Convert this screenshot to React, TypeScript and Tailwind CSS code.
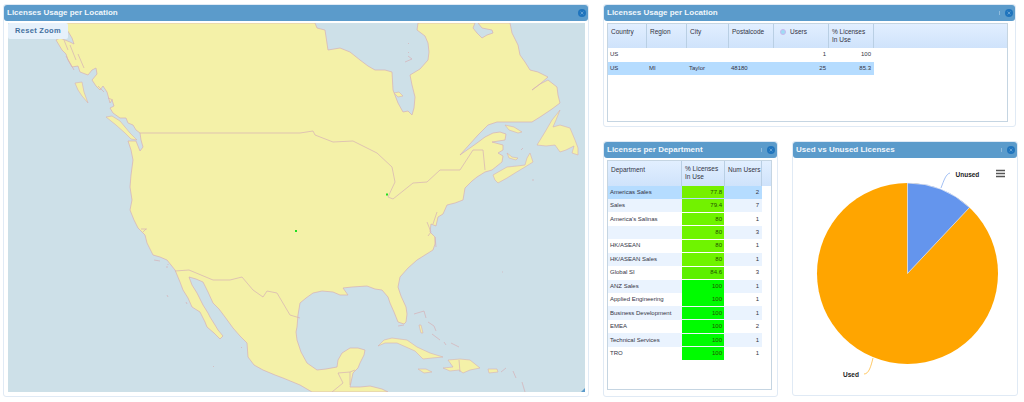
const font = 'font-["Liberation_Sans",Arial,sans-serif]';

const landPath =
  'M60 23 L66 28 L72 38 L74 44 L70 42 L65 40 L60 38 L56 40 L62 50 L66 54 L68 60 L72 67 L78 66 L80 72 L88 75 L92 70 L96 68 L97 74 L92 80 L96 86 L100 90 L103 86 L107 92 L110 103 L112 100 L114 106 L110 108 L113 113 L120 118 L126 118 L128 123 L133 125 L136 130 L140 133 L141 140 L143 147 L140 151 L138 146 L136 141 L128 141 L131 150 L133 160 L131 175 L130 187 L132 200 L130 210 L134 220 L138 228 L145 235 L147 243 L153 255 L160 257 L167 260 L175 270 L180 282 L183 290 L188 298 L192 307 L200 312 L205 322 L207 327 L214 333 L220 339 L223 336 L218 330 L215 325 L210 317 L208 313 L203 305 L197 293 L192 285 L189 277 L196 279 L203 282 L208 292 L213 303 L219 309 L225 317 L233 328 L240 336 L247 343 L248 357 L254 365 L263 370 L275 375 L283 378 L300 385 L312 392 L388 392 L382 389 L370 386 L360 387 L350 387 L353 373 L358 368 L360 363 L364 355 L365 350 L358 348 L350 348 L342 353 L338 360 L337 367 L326 369 L317 370 L307 363 L301 352 L297 340 L296 332 L297 327 L298 315 L300 303 L306 298 L313 293 L322 291 L333 292 L340 295 L348 295 L343 288 L352 287 L367 286 L375 289 L382 290 L388 297 L390 303 L394 312 L398 322 L404 324 L406 322 L407 314 L406 307 L401 296 L398 287 L400 277 L408 268 L417 260 L425 255 L433 250 L435 244 L435 237 L430 232 L431 224 L436 226 L438 217 L443 214 L447 205 L455 203 L463 200 L465 188 L472 181 L477 177 L485 172 L492 170 L497 166 L502 162 L503 156 L498 153 L503 150 L503 145 L492 142 L505 140 L506 134 L500 132 L493 133 L485 137 L477 143 L460 155 L478 135 L488 125 L497 122 L515 122 L532 122 L540 117 L552 109 L560 103 L558 95 L557 87 L548 80 L540 84 L532 90 L540 84 L548 77 L538 72 L530 70 L525 62 L520 55 L518 45 L512 33 L510 23 L478 23 L482 28 L492 30 L493 33 L487 35 L482 38 L477 33 L473 28 L475 23 L418 23 L417 30 L425 36 L428 43 L429 52 L428 60 L420 69 L410 75 L412 85 L415 97 L414 108 L412 115 L408 111 L403 112 L398 103 L393 90 L392 72 L385 70 L375 70 L368 66 L360 60 L350 52 L340 48 L328 50 L325 30 L317 28 L315 23 Z';

const islands = [
  'M106 117 L112 116 L120 121 L130 133 L137 140 L131 139 L125 133 L116 125 Z',
  'M75 83 L82 82 L84 92 L88 103 L82 96 L78 90 Z',
  'M394 93 L399 92 L403 96 L398 97 Z',
  'M505 125 L514 127 L522 132 L518 133 L509 130 Z',
  'M537 145 L545 132 L552 120 L560 110 L556 120 L553 127 L560 125 L570 128 L575 140 L578 148 L578 155 L572 153 L574 146 L566 150 L560 152 L555 145 L546 146 Z',
  'M378 346 L384 340 L392 338 L407 340 L417 347 L430 353 L443 357 L432 358 L423 359 L415 351 L397 343 L385 343 Z',
  'M443 368 L453 367 L448 360 L460 359 L470 360 L480 368 L470 370 L463 373 L459 370 L450 371 Z',
  'M418 369 L426 369 L432 372 L424 373 Z',
  'M488 369 L497 369 L498 372 L489 373 Z',
  'M495 180 L493 175 L500 171 L507 167 L517 166 L525 165 L527 158 L530 153 L533 162 L525 167 L515 173 L507 178 L498 183 Z',
  'M507 153 L512 157 L518 158 L516 160 L509 158 Z',
  'M419 325 L421 325 L423 333 L421 333 Z',
];

const lines = [
  // US-Canada
  'M140 133 L300 133 L313 131 L315 135 L333 142 L353 141 L377 153 L392 167 L395 182 L388 197 L393 199 L413 183 L427 182 L440 170 L460 170 L473 150 L483 150 L485 170',
  // US-Mexico
  'M175 271 L189 270 L213 280 L230 280 L242 277 L253 290 L263 297 L267 291 L277 293 L290 315 L300 318',
  // Central America
  'M338 373 L343 383 L332 392 M350 372 L350 385 M338 373 L350 372 L355 370',
  'M459 360 L460 372',
  // Santa Barbara, Bay area
  'M141 229 L147 229 M143 232 L146 229',
  // Belcher
  'M408 56 L412 59 L405 62 M409 52 L408 53 M408 43 L409 44',
  // Alaska fjords
  'M64 40 L68 50 M70 45 L76 60 M78 54 L84 68 M66 56 L74 70 M98 86 L104 92 M108 98 L113 100',
  // Chesapeake, Outer Banks
  'M427 222 L431 232 L428 236 M437 212 L433 224 M435 237 L436 247',
  // Bahamas, Antilles
  'M414 314 L424 311 L426 318 M428 322 L434 326 L436 331 M432 334 L440 340 M444 342 L446 345 M451 343 L459 347 M501 372 L506 368 M513 371 L516 378 M522 382 L525 392',
  'M398 326 L404 325',
  // Pacific specks
  'M154 260 L160 261 M167 266 L167 268 M168 264 L168 265 M167 295 L168 297 M186 302 L187 304 M241 347 L242 348 M213 366 L214 367',
  'M502 272 L503 272 M532 180 L534 180 M521 150 L523 148',
];

function PanelHeader({ title, pin }: { title: string; pin?: boolean }) {
  return (
    <div className="flex h-[16px] shrink-0 items-center justify-between rounded-[3px] bg-[#5b9bcb] pl-[3px] pr-[2px]">
      <span className={`${font} pb-[1px] text-[8px] font-bold text-[#f0f6fb]`}>{title}</span>
      <div className="flex items-center gap-[5px]">
        {pin && <span className="h-[4px] w-[1.5px] bg-[#8fbbdc]" />}
        <svg width="8" height="8" viewBox="0 0 8 8">
          <circle cx="4" cy="4" r="4" fill="#1f74bd" />
          <path d="M2.6 2.6 L5.4 5.4 M5.4 2.6 L2.6 5.4" stroke="#6aa5d6" strokeWidth="0.9" />
        </svg>
      </div>
    </div>
  );
}

function MapPanel() {
  return (
    <div className="flex h-[393px] w-[586px] shrink-0 flex-col rounded-[3px] border border-[#e0eaf5] bg-white">
      <PanelHeader title="Licenses Usage per Location" />
      <div className="relative ml-[4px] mt-[2px] h-[369px] w-[577px] bg-[#cde0e8]">
        <svg className="block" width="577" height="369" viewBox="8 23 577 369">
          <path d={landPath} fill="#f4f1a8" stroke="#d6b0b6" strokeWidth="0.7" strokeLinejoin="round" />
          {islands.map((d, i) => (
            <path key={i} d={d} fill="#f4f1a8" stroke="#d6b0b6" strokeWidth="0.6" strokeLinejoin="round" />
          ))}
          {lines.map((d, i) => (
            <path key={i} d={d} fill="none" stroke="#d6b0b6" strokeWidth="0.7" />
          ))}
          <rect x="386" y="193.5" width="2" height="2" fill="#22dd22" />
          <rect x="295" y="230" width="2" height="2" fill="#22dd22" />
          <path d="M585 388 L585 392 L581 392 Z" fill="#5b9bcb" />
        </svg>
        <button className={`${font} absolute left-0 top-0 h-[16px] w-[60px] rounded-[2px] bg-[#e6f1fb] text-[7.5px] font-bold tracking-[0.3px] text-[#44709f]`}>
          Reset Zoom
        </button>
      </div>
    </div>
  );
}

const locCols = [
  { name: 'Country', w: 'w-[39px]' },
  { name: 'Region', w: 'w-[40px]' },
  { name: 'City', w: 'w-[42px]' },
  { name: 'Postalcode', w: 'w-[45px]' },
  { name: 'Users', w: 'w-[55px]' },
  { name: '% Licenses', extra: 'In Use', w: 'w-[45px]' },
];

const locRows = [
  { c: 'US', r: '', city: '', p: '', u: '1', pct: '100', sel: false },
  { c: 'US', r: 'MI', city: 'Taylor', p: '48180', u: '25', pct: '85.3', sel: true },
];

function LocationPanel() {
  return (
    <div className="flex h-[123px] w-[413px] flex-col rounded-[3px] border border-[#e0eaf5] bg-white">
      <PanelHeader title="Licenses Usage per Location" pin />
      <div className={`${font} ml-[3px] mt-[2px] flex h-[99px] w-[401px] flex-col border border-[#c5d5e2] text-[6px] text-[#333344]`}>
        <div className="flex h-[24px] bg-gradient-to-b from-[#e2efff] to-[#cfe3fb] text-[6.5px]">
          {locCols.map((col) => (
            <div key={col.name} className={`${col.w} flex shrink-0 gap-[4px] border-r border-[#b9cfe4] pl-[3px] pt-[4px] leading-[8px]`}>
              {col.name === 'Users' && (
                <span className="ml-[3px] mt-[1px] h-[6px] w-[6px] rounded-full border border-[#c9b8ee] bg-[#9fdcf5]" />
              )}
              <span>
                {col.name}
                {col.extra && <br />}
                {col.extra}
              </span>
            </div>
          ))}
        </div>
        {locRows.map((row, i) => (
          <div key={i} className={`flex h-[13.5px] w-[266px] items-center ${row.sel ? 'bg-[#b5dcff]' : 'bg-white'}`}>
            <span className="w-[39px] shrink-0 pl-[2px]">{row.c}</span>
            <span className="w-[40px] shrink-0 pl-[2px]">{row.r}</span>
            <span className="w-[42px] shrink-0 pl-[2px]">{row.city}</span>
            <span className="w-[45px] shrink-0 pl-[2px]">{row.p}</span>
            <span className="w-[55px] shrink-0 pr-[3px] text-right">{row.u}</span>
            <span className="w-[45px] shrink-0 pr-[3px] text-right">{row.pct}</span>
          </div>
        ))}
      </div>
    </div>
  );
}

const deptRows = [
  { d: 'Americas Sales', p: '77.8', n: '2', bar: 'bg-[#76f000]', row: 'bg-[#b5dcff]' },
  { d: 'Sales', p: '79.4', n: '7', bar: 'bg-[#72f200]', row: 'bg-[#eaf3fe]' },
  { d: "America's Salinas", p: '80', n: '1', bar: 'bg-[#6ff400]', row: 'bg-white' },
  { d: '', p: '80', n: '3', bar: 'bg-[#6ff400]', row: 'bg-[#eaf3fe]' },
  { d: 'HK/ASEAN', p: '80', n: '1', bar: 'bg-[#6ff400]', row: 'bg-white' },
  { d: 'HK/ASEAN Sales', p: '80', n: '1', bar: 'bg-[#6ff400]', row: 'bg-[#eaf3fe]' },
  { d: 'Global SI', p: '84.6', n: '3', bar: 'bg-[#5cf000]', row: 'bg-white' },
  { d: 'ANZ Sales', p: '100', n: '1', bar: 'bg-[#00fc00]', row: 'bg-[#eaf3fe]' },
  { d: 'Applied Engineering', p: '100', n: '1', bar: 'bg-[#00fc00]', row: 'bg-white' },
  { d: 'Business Development', p: '100', n: '1', bar: 'bg-[#00fc00]', row: 'bg-[#eaf3fe]' },
  { d: 'EMEA', p: '100', n: '2', bar: 'bg-[#00fc00]', row: 'bg-white' },
  { d: 'Technical Services', p: '100', n: '1', bar: 'bg-[#00fc00]', row: 'bg-[#eaf3fe]' },
  { d: 'TRO', p: '100', n: '1', bar: 'bg-[#00fc00]', row: 'bg-white' },
];

function DepartmentPanel() {
  return (
    <div className="flex h-[256px] w-[175px] flex-col rounded-[3px] border border-[#e0eaf5] bg-white">
      <PanelHeader title="Licenses per Department" pin />
      <div className={`${font} ml-[3px] mt-[2px] flex h-[230px] w-[165px] flex-col border border-[#c5d5e2] text-[6px] text-[#333344]`}>
        <div className="flex h-[24.5px] shrink-0 bg-gradient-to-b from-[#e2efff] to-[#cfe3fb] text-[6.5px]">
          <div className="w-[74px] border-r border-[#b9cfe4] pl-[3px] pt-[4px]">Department</div>
          <div className="w-[43px] border-r border-[#b9cfe4] pl-[3px] pt-[4px] leading-[8px]">
            % Licenses
            <br />
            In Use
          </div>
          <div className="w-[37px] border-r border-[#b9cfe4] pl-[3px] pt-[4px]">Num Users</div>
        </div>
        {deptRows.map((row, i) => (
          <div key={i} className={`flex h-[13.45px] w-[154px] shrink-0 items-center ${row.row}`}>
            <span className="w-[74px] shrink-0 pl-[2px]">{row.d}</span>
            <span className={`flex h-[12.5px] w-[42px] shrink-0 items-center justify-end pr-[2px] text-[#245000] ${row.bar}`}>{row.p}</span>
            <span className="flex-1 pr-[3px] text-right">{row.n}</span>
          </div>
        ))}
      </div>
    </div>
  );
}

function PiePanel() {
  return (
    <div className="flex h-[255px] w-[226px] flex-col rounded-[3px] border border-[#e0eaf5] bg-white">
      <PanelHeader title="Used vs Unused Licenses" pin />
      <svg className="block" width="224" height="237" viewBox="793 158 224 237">
        <circle cx="907.5" cy="273.5" r="90.5" fill="#ffa500" />
        <path d="M907.5 273.5 L907.5 183 A90.5 90.5 0 0 1 969.5 207.5 Z" fill="#6495ed" stroke="#e8eefc" strokeWidth="0.7" strokeLinejoin="round" />
        <path d="M941 188 C944 180 946 174 950 173" fill="none" stroke="#6495ed" strokeWidth="0.6" />
        <path d="M873 358 C871 366 869 374 864 374" fill="none" stroke="#ffa500" strokeWidth="0.6" />
        <text x="955.5" y="177" fontFamily="Liberation Sans, Arial, sans-serif" fontSize="6.5" fontWeight="700" fill="#222">Unused</text>
        <text x="843" y="377" fontFamily="Liberation Sans, Arial, sans-serif" fontSize="6.5" fontWeight="700" fill="#222">Used</text>
        <path d="M996 170.5 H1005 M996 173.5 H1005 M996 176.5 H1005" stroke="#555" strokeWidth="1.5" />
      </svg>
    </div>
  );
}

export default function App() {
  return (
    <div className="flex h-[402px] w-[1024px] gap-[14px] overflow-hidden bg-white pl-[3px] pt-[4px]">
      <MapPanel />
      <div className="flex flex-col gap-[14px]">
        <LocationPanel />
        <div className="flex gap-[14px]">
          <DepartmentPanel />
          <PiePanel />
        </div>
      </div>
    </div>
  );
}
